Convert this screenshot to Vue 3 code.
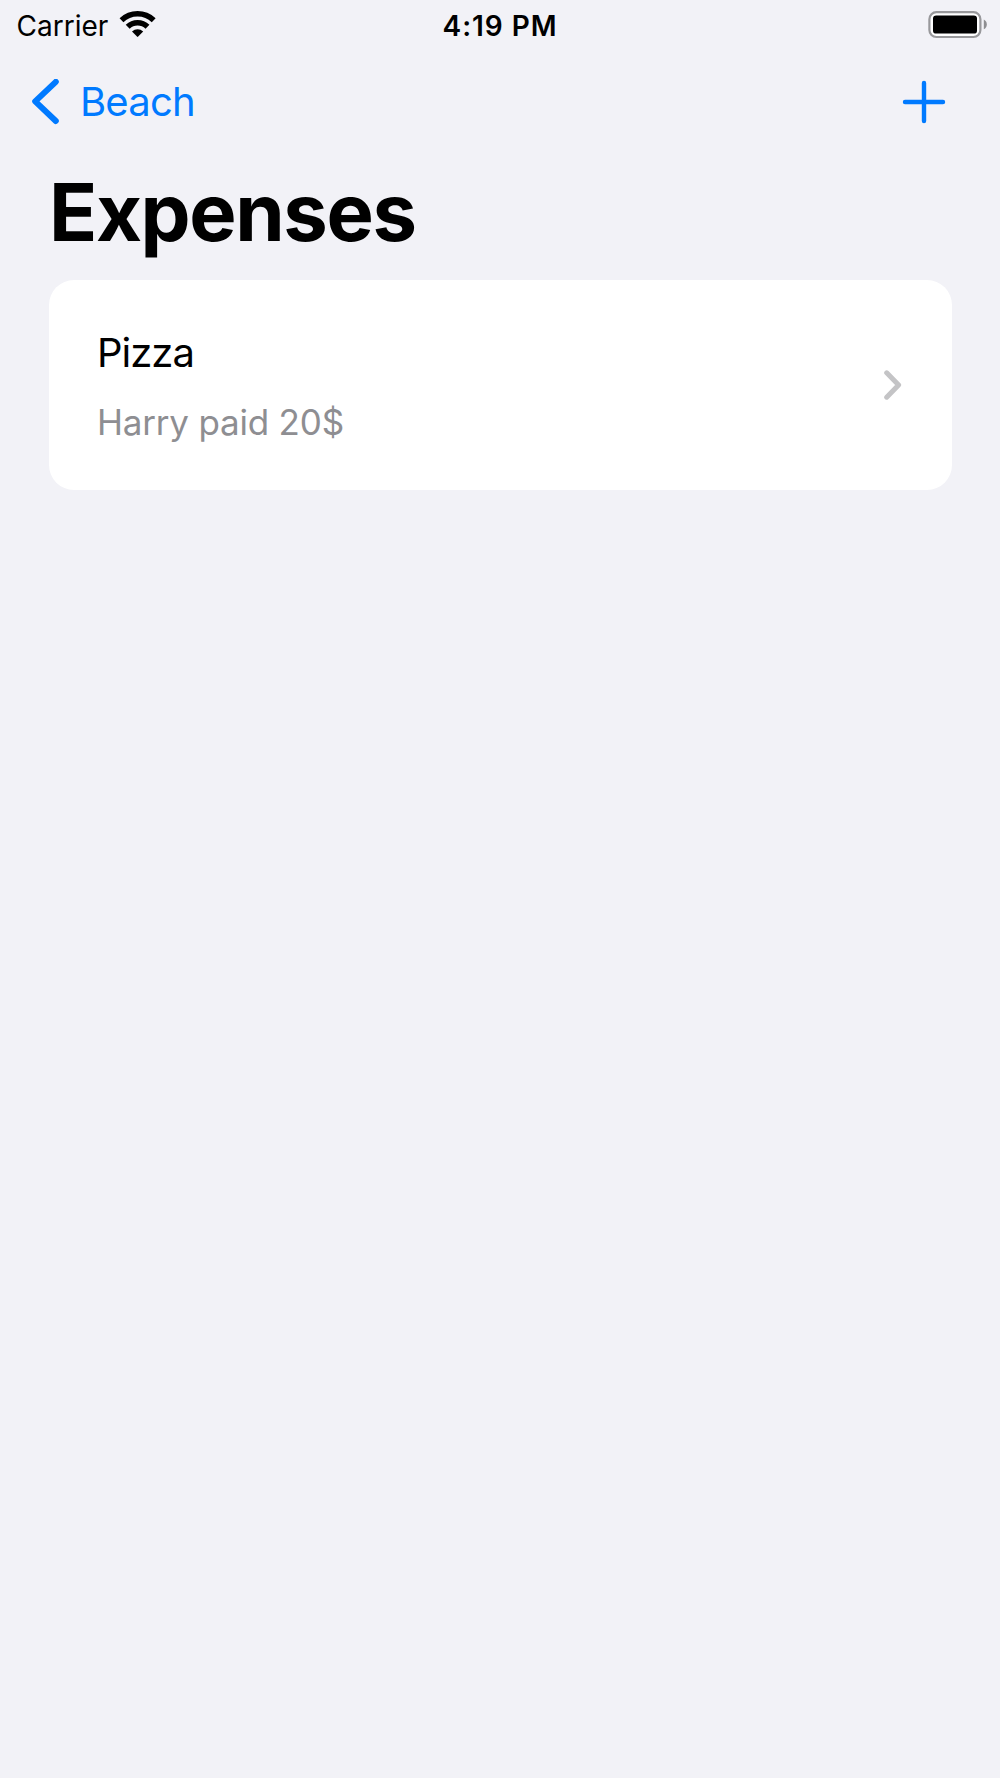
<script setup>
import { ref } from 'vue'

const status = {
  carrier: 'Carrier',
  time: '4:19 PM'
}

const expenses = ref([
  { id: 1, title: 'Pizza', payer: 'Harry', amount: 20 }
])
</script>

<template>
  <div class="screen">
    <!-- Status bar -->
    <div class="status-bar">
      <div class="status-left">
        <span class="carrier">{{ status.carrier }}</span>
        <svg class="wifi" width="38" height="28" viewBox="0 0 38 28">
          <path
            d="M2.5 9.2A23.5 23.5 0 0 1 34.7 9.2M8.7 15.8A14.2 14.2 0 0 1 28.5 15.8"
            fill="none"
            stroke="#000"
            stroke-width="5.6"
          />
          <path d="M13 20.4A8.6 8.6 0 0 1 24.2 20.4L19.2 25.6Q18.6 26.2 18 25.6Z" />
        </svg>
      </div>
      <span class="time">{{ status.time }}</span>
      <div class="status-right">
        <svg class="battery" width="60" height="28" viewBox="0 0 60 28">
          <rect x="1.4" y="1.2" width="51" height="24.8" rx="7" fill="#fff" stroke="#98989b" stroke-width="2.2" />
          <rect x="5" y="4.4" width="44" height="18.2" rx="3.2" />
          <path d="M55.8 8.6Q58.8 10.2 58.8 13.4Q58.8 16.6 55.8 18.2Z" fill="#8e8e91" />
        </svg>
      </div>
    </div>

    <!-- Navigation bar -->
    <nav class="nav-bar">
      <button class="btn-back">
        <svg width="28" height="46" viewBox="0 0 28 46">
          <path d="M24.8 2.8L4.2 22.4L24.8 42" />
        </svg>
        <span>Beach</span>
      </button>
      <button class="btn-add">
        <svg width="44" height="44" viewBox="0 0 44 44">
          <path d="M22 3V41M3 22H41" />
        </svg>
      </button>
    </nav>

    <h1 class="title">Expenses</h1>

    <!-- Expense list -->
    <ul class="expense-list">
      <li v-for="expense in expenses" :key="expense.id" class="expense-row">
        <div class="expense-info">
          <span class="expense-title">{{ expense.title }}</span>
          <span class="expense-detail">{{ expense.payer }} paid {{ expense.amount }}$</span>
        </div>
        <svg class="chevron" width="18" height="30" viewBox="0 0 18 30">
          <path d="M2.7 2.8L14.6 15L2.7 27.2" />
        </svg>
      </li>
    </ul>
  </div>
</template>

<style>
body {
  margin: 0;
  background: #f2f2f7;
}
</style>

<style scoped>
.screen {
  min-height: 1778px;
  background: #f2f2f7;
  color: #000;
  font-family: Inter, 'Liberation Sans', sans-serif;
}

/* Status bar */
.status-bar {
  display: grid;
  grid-template-columns: 1fr auto 1fr;
  align-items: center;
  height: 50px;
  padding: 0 12px;
  font-size: 28px;
}

.status-left {
  display: flex;
  align-items: center;
  gap: 11px;
  padding-left: 4.5px;
}

.carrier,
.time {
  padding-top: 1px;
  line-height: 48px;
}

.time {
  font-weight: 600;
  letter-spacing: 0.95px;
}

.status-right {
  display: flex;
  justify-content: flex-end;
}

/* Navigation bar */
.nav-bar {
  display: flex;
  justify-content: space-between;
  align-items: center;
  height: 104px;
  padding: 0 54.5px 0 31px;
}

button {
  display: flex;
  align-items: center;
  padding: 0;
  border: none;
  background: none;
  color: #007aff;
  font-family: inherit;
  font-size: 40px;
  line-height: 48px;
  letter-spacing: -0.8px;
  cursor: pointer;
}

button path {
  fill: none;
  stroke: #007aff;
  stroke-linecap: round;
  stroke-linejoin: round;
}

.btn-back {
  gap: 21px;
}

.btn-back path {
  stroke-width: 6;
}

.btn-add path {
  stroke-width: 4.4;
}

.title {
  height: 119px;
  margin: 0 0 7px;
  padding-left: 49px;
  font-size: 79.5px;
  font-weight: 700;
  line-height: 117px;
  letter-spacing: -1.4px;
}

/* Expense list */
.expense-list {
  margin: 0 48.5px;
  padding: 0;
  border-radius: 25px;
  background: #fff;
  list-style: none;
}

.expense-row {
  display: flex;
  justify-content: space-between;
  align-items: center;
  height: 210px;
  padding: 0 49.5px 0 48.5px;
  box-sizing: border-box;
}

.expense-info {
  display: flex;
  flex-direction: column;
  gap: 23px;
  padding-top: 3px;
}

.expense-title {
  font-size: 40px;
  line-height: 48px;
  letter-spacing: -1px;
}

.expense-detail {
  color: #8e8e92;
  font-size: 35px;
  line-height: 44px;
  letter-spacing: -0.2px;
}

.chevron path {
  fill: none;
  stroke: #c4c4c6;
  stroke-width: 5;
  stroke-linecap: round;
  stroke-linejoin: round;
}
</style>
